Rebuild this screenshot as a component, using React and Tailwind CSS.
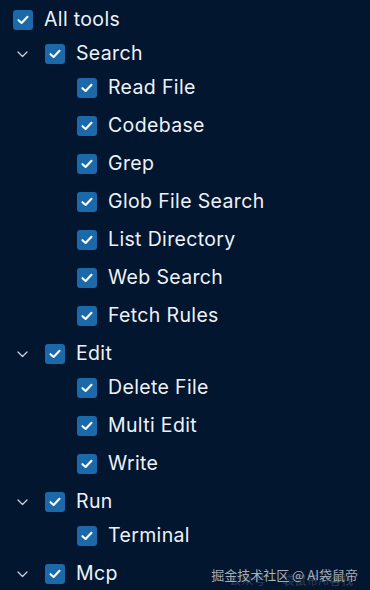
const tree = [
  {
    label: "Search",
    children: [
      "Read File",
      "Codebase",
      "Grep",
      "Glob File Search",
      "List Directory",
      "Web Search",
      "Fetch Rules",
    ],
  },
  { label: "Edit", children: ["Delete File", "Multi Edit", "Write"] },
  { label: "Run", children: ["Terminal"] },
  { label: "Mcp", children: [] },
];

function Check() {
  return (
    <span className="flex h-5 w-5 shrink-0 items-center justify-center rounded-[3px] bg-[#1b69a8]">
      <svg width="12" height="10" viewBox="0 0 12 10" fill="none">
        <path
          d="M1.5 5.2 L4.6 8 L10.5 1.8"
          stroke="#fff"
          strokeWidth="2.1"
          strokeLinecap="round"
          strokeLinejoin="round"
        />
      </svg>
    </span>
  );
}

function Chevron() {
  return (
    <span className="flex w-8 shrink-0 items-center pl-[4px]">
      <svg width="11" height="7" viewBox="0 0 11 7" fill="none">
        <path
          d="M1 1 L5.5 5.5 L10 1"
          stroke="#c9d2de"
          strokeWidth="1.3"
          strokeLinecap="round"
          strokeLinejoin="round"
        />
      </svg>
    </span>
  );
}

function Row({ label, level = 0 }) {
  return (
    <div className="flex h-[34px] items-center">
      {level === 1 && <Chevron />}
      {level === 2 && <span className="w-16 shrink-0" />}
      <Check />
      <span className="ml-[11px] text-[19.5px] leading-none tracking-[0.35px] text-[#eef2f7]">
        {label}
      </span>
    </div>
  );
}

export default function App() {
  return (
    <div
      className="relative h-[590px] w-[370px] overflow-hidden bg-[#021630] pl-[13px] pt-[3px]"
      style={{ fontFamily: "Inter, 'Noto Sans', sans-serif" }}
    >
      <Row label="All tools" />
      <div className="flex flex-col gap-1">
        {tree.map((g) => (
          <div key={g.label}>
            <Row label={g.label} level={1} />
            <div className="flex flex-col gap-1">
              {g.children.map((c) => (
                <Row key={c} label={c} level={2} />
              ))}
            </div>
          </div>
        ))}
      </div>
      <div
        className="absolute right-[12px] bottom-[9px] text-[13px] leading-none text-[#c4c9d0]/85"
        style={{ fontFamily: "'Noto Sans CJK SC', sans-serif" }}
      >
        <span className="absolute left-[18px] top-[6px] whitespace-nowrap text-[12px] leading-none text-[#8a93a0]/35">
          公众号 · 袋鼠帝AI客栈
        </span>
        <span className="relative whitespace-nowrap">掘金技术社区 @ AI袋鼠帝</span>
      </div>
    </div>
  );
}
